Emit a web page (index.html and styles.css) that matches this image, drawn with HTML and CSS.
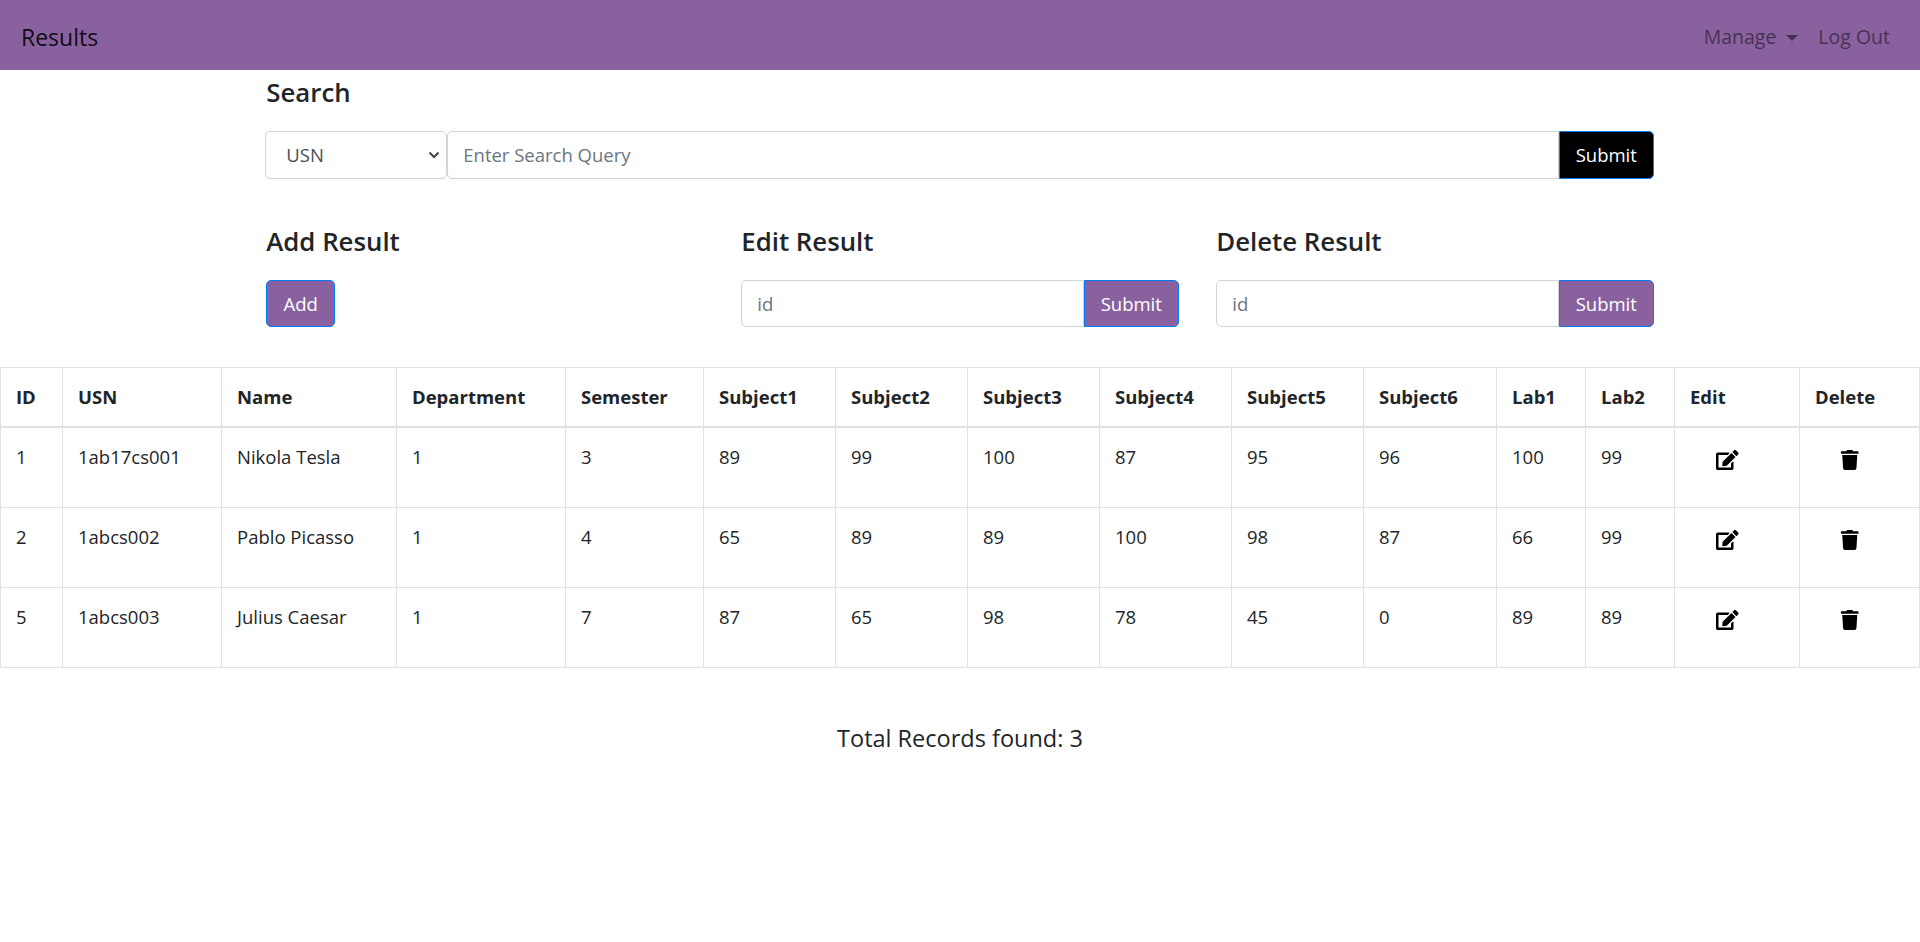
FILE: index.html
```html
<!DOCTYPE html>
<html>
<head>
	<title>Results</title>
	<link rel="stylesheet" href="styles.css">
</head>
<body>
	<nav class="navbar">
		<a class="navbar-brand" href="#">Results</a>
		<div class="navbar-links">
			<a class="nav-link" href="#">Manage<span class="caret"></span></a>
			<a class="nav-link" href="#">Log Out</a>
		</div>
	</nav>

	<div class="container">
		<h5 class="search-title">Search</h5>
		<form class="input-group search-form">
			<select class="search-select">
				<option>USN</option>
				<option>Name</option>
			</select>
			<input class="form-control" type="text" placeholder="Enter Search Query">
			<button class="btn btn-black" type="submit">Submit</button>
		</form>

		<div class="actions">
			<div class="action">
				<h5>Add Result</h5>
				<button class="btn" type="button">Add</button>
			</div>
			<div class="action">
				<h5>Edit Result</h5>
				<form class="input-group">
					<input class="form-control" type="text" placeholder="id">
					<button class="btn" type="submit">Submit</button>
				</form>
			</div>
			<div class="action">
				<h5>Delete Result</h5>
				<form class="input-group">
					<input class="form-control" type="text" placeholder="id">
					<button class="btn" type="submit">Submit</button>
				</form>
			</div>
		</div>
	</div>

	<table class="results-table">
		<colgroup>
			<col class="col-id">
			<col class="col-usn">
			<col class="col-name">
			<col class="col-dept">
			<col class="col-sem">
			<col class="col-sub">
			<col class="col-sub">
			<col class="col-sub">
			<col class="col-sub">
			<col class="col-sub">
			<col class="col-sub-last">
			<col class="col-lab">
			<col class="col-lab">
			<col class="col-edit">
			<col class="col-delete">
		</colgroup>
		<thead>
			<tr>
				<th>ID</th>
				<th>USN</th>
				<th>Name</th>
				<th>Department</th>
				<th>Semester</th>
				<th>Subject1</th>
				<th>Subject2</th>
				<th>Subject3</th>
				<th>Subject4</th>
				<th>Subject5</th>
				<th>Subject6</th>
				<th>Lab1</th>
				<th>Lab2</th>
				<th>Edit</th>
				<th>Delete</th>
			</tr>
		</thead>
		<tbody>
			<tr>
				<td>1</td><td>1ab17cs001</td><td>Nikola Tesla</td><td>1</td><td>3</td>
				<td>89</td><td>99</td><td>100</td><td>87</td><td>95</td><td>96</td><td>100</td><td>99</td>
				<td><a class="icon-btn" href="#"><svg class="icon-edit" viewBox="0 0 576 512"><path d="M402.6 83.2l90.2 90.2c3.8 3.8 3.8 10 0 13.8L274.4 405.6l-92.8 10.3c-12.4 1.4-22.9-9.1-21.5-21.5l10.3-92.8L388.8 83.2c3.8-3.8 10-3.8 13.8 0zm162-22.9l-48.8-48.8c-15.2-15.2-39.9-15.2-55.2 0l-35.4 35.4c-3.8 3.8-3.8 10 0 13.8l90.2 90.2c3.8 3.8 10 3.8 13.8 0l35.4-35.4c15.2-15.3 15.2-40 0-55.2zM384 346.2V448H64V128h229.8c3.2 0 6.2-1.3 8.5-3.5l40-40c7.6-7.6 2.2-20.5-8.5-20.5H48C21.5 64 0 85.5 0 112v352c0 26.5 21.5 48 48 48h352c26.5 0 48-21.5 48-48V306.2c0-10.7-12.9-16-20.5-8.5l-40 40c-2.2 2.3-3.5 5.3-3.5 8.5z"/></svg></a></td>
				<td><a class="icon-btn" href="#"><svg class="icon-trash" viewBox="0 0 448 512"><path d="M432 32H312l-9.4-18.7A24 24 0 0 0 281.1 0H166.8a23.72 23.72 0 0 0-21.4 13.3L136 32H16A16 16 0 0 0 0 48v32a16 16 0 0 0 16 16h416a16 16 0 0 0 16-16V48a16 16 0 0 0-16-16zM53.2 467a48 48 0 0 0 47.9 45h245.8a48 48 0 0 0 47.9-45L416 128H32z"/></svg></a></td>
			</tr>
			<tr>
				<td>2</td><td>1abcs002</td><td>Pablo Picasso</td><td>1</td><td>4</td>
				<td>65</td><td>89</td><td>89</td><td>100</td><td>98</td><td>87</td><td>66</td><td>99</td>
				<td><a class="icon-btn" href="#"><svg class="icon-edit" viewBox="0 0 576 512"><path d="M402.6 83.2l90.2 90.2c3.8 3.8 3.8 10 0 13.8L274.4 405.6l-92.8 10.3c-12.4 1.4-22.9-9.1-21.5-21.5l10.3-92.8L388.8 83.2c3.8-3.8 10-3.8 13.8 0zm162-22.9l-48.8-48.8c-15.2-15.2-39.9-15.2-55.2 0l-35.4 35.4c-3.8 3.8-3.8 10 0 13.8l90.2 90.2c3.8 3.8 10 3.8 13.8 0l35.4-35.4c15.2-15.3 15.2-40 0-55.2zM384 346.2V448H64V128h229.8c3.2 0 6.2-1.3 8.5-3.5l40-40c7.6-7.6 2.2-20.5-8.5-20.5H48C21.5 64 0 85.5 0 112v352c0 26.5 21.5 48 48 48h352c26.5 0 48-21.5 48-48V306.2c0-10.7-12.9-16-20.5-8.5l-40 40c-2.2 2.3-3.5 5.3-3.5 8.5z"/></svg></a></td>
				<td><a class="icon-btn" href="#"><svg class="icon-trash" viewBox="0 0 448 512"><path d="M432 32H312l-9.4-18.7A24 24 0 0 0 281.1 0H166.8a23.72 23.72 0 0 0-21.4 13.3L136 32H16A16 16 0 0 0 0 48v32a16 16 0 0 0 16 16h416a16 16 0 0 0 16-16V48a16 16 0 0 0-16-16zM53.2 467a48 48 0 0 0 47.9 45h245.8a48 48 0 0 0 47.9-45L416 128H32z"/></svg></a></td>
			</tr>
			<tr>
				<td>5</td><td>1abcs003</td><td>Julius Caesar</td><td>1</td><td>7</td>
				<td>87</td><td>65</td><td>98</td><td>78</td><td>45</td><td>0</td><td>89</td><td>89</td>
				<td><a class="icon-btn" href="#"><svg class="icon-edit" viewBox="0 0 576 512"><path d="M402.6 83.2l90.2 90.2c3.8 3.8 3.8 10 0 13.8L274.4 405.6l-92.8 10.3c-12.4 1.4-22.9-9.1-21.5-21.5l10.3-92.8L388.8 83.2c3.8-3.8 10-3.8 13.8 0zm162-22.9l-48.8-48.8c-15.2-15.2-39.9-15.2-55.2 0l-35.4 35.4c-3.8 3.8-3.8 10 0 13.8l90.2 90.2c3.8 3.8 10 3.8 13.8 0l35.4-35.4c15.2-15.3 15.2-40 0-55.2zM384 346.2V448H64V128h229.8c3.2 0 6.2-1.3 8.5-3.5l40-40c7.6-7.6 2.2-20.5-8.5-20.5H48C21.5 64 0 85.5 0 112v352c0 26.5 21.5 48 48 48h352c26.5 0 48-21.5 48-48V306.2c0-10.7-12.9-16-20.5-8.5l-40 40c-2.2 2.3-3.5 5.3-3.5 8.5z"/></svg></a></td>
				<td><a class="icon-btn" href="#"><svg class="icon-trash" viewBox="0 0 448 512"><path d="M432 32H312l-9.4-18.7A24 24 0 0 0 281.1 0H166.8a23.72 23.72 0 0 0-21.4 13.3L136 32H16A16 16 0 0 0 0 48v32a16 16 0 0 0 16 16h416a16 16 0 0 0 16-16V48a16 16 0 0 0-16-16zM53.2 467a48 48 0 0 0 47.9 45h245.8a48 48 0 0 0 47.9-45L416 128H32z"/></svg></a></td>
			</tr>
		</tbody>
	</table>

	<h5 class="total">Total Records found: 3</h5>
</body>
</html>
```

FILE: styles.css
```css
:root {
  --purple: #89619f;
  --text: #212529;
  --border: #dee2e6;
  --input-border: #ced4da;
  --btn-border: #007bff;
}

* {
  box-sizing: border-box;
}

html {
  font-size: 20px;
}

body {
  margin: 0;
  font-family: "Open Sans", sans-serif;
  font-size: 18.5px;
  line-height: 30px;
  color: var(--text);
  background-color: white;
}

h5 {
  margin: 0;
  font-size: 25.8px;
  line-height: 30px;
  font-weight: 600;
}

.navbar {
  height: 70px;
  padding: 4px 20px 0 21px;
  display: flex;
  align-items: center;
  justify-content: space-between;
  background-color: var(--purple);
}

.navbar-brand {
  font-size: 23px;
  color: rgba(0, 0, 0, 0.9);
  text-decoration: none;
}

.navbar-links {
  display: flex;
  align-items: center;
}

.nav-link {
  padding: 0 10px;
  font-size: 19.5px;
  color: rgba(0, 0, 0, 0.5);
  text-decoration: none;
}

.caret {
  display: inline-block;
  margin-left: 10px;
  vertical-align: 3px;
  border-top: 6px solid;
  border-left: 6px solid transparent;
  border-right: 6px solid transparent;
}

.container {
  width: 1387.5px;
  margin: 0 auto;
}

.search-title {
  padding-top: 7px;
  margin-bottom: 24px;
}

.input-group {
  display: flex;
  height: 47.5px;
}

.search-select {
  width: 182px;
  margin-left: -1px;
  padding: 0 20px;
  font-family: inherit;
  font-size: inherit;
  color: #495057;
  background-color: white;
  background-image: url("data:image/svg+xml,%3Csvg xmlns='http://www.w3.org/2000/svg' viewBox='0 0 12 8'%3E%3Cpath d='M1.5 1.5 6 6l4.500-4.500' fill='none' stroke='%23444' stroke-width='2'/%3E%3C/svg%3E");
  background-repeat: no-repeat;
  background-position: right 6px center;
  background-size: 12px 8px;
  border: 1px solid var(--input-border);
  border-radius: 5px;
  appearance: none;
}

.form-control {
  flex: 1;
  min-width: 0;
  padding: 0 15px;
  font-family: inherit;
  font-size: inherit;
  color: #495057;
  border: 1px solid var(--input-border);
  border-radius: 5px 0 0 5px;
}

.form-control::placeholder {
  color: #6c757d;
}

.btn {
  height: 47.5px;
  padding: 0 15px;
  font-family: inherit;
  font-size: inherit;
  color: white;
  background-color: var(--purple);
  border: 1px solid var(--btn-border);
  border-radius: 5px;
  cursor: pointer;
}

.input-group .btn {
  width: 95px;
  border-radius: 0 5px 5px 0;
}

.btn-black {
  background-color: black;
}

.actions {
  display: grid;
  grid-template-columns: repeat(3, 437.5px);
  column-gap: 37.5px;
  padding-top: 47px;
}

.action h5 {
  margin-bottom: 24px;
}

.action > .btn {
  width: 69px;
}

.results-table {
  width: 100%;
  margin-top: 40px;
  table-layout: fixed;
  border-collapse: collapse;
}

.results-table th,
.results-table td {
  padding: 14px 15px 15px;
  text-align: left;
  vertical-align: top;
  border: 1px solid var(--border);
}

.results-table th {
  padding-bottom: 14px;
  font-weight: 700;
  border-bottom-width: 2px;
}

.col-id { width: 62px; }
.col-usn { width: 159px; }
.col-name { width: 175px; }
.col-dept { width: 169px; }
.col-sem { width: 138px; }
.col-sub { width: 132px; }
.col-sub-last { width: 133px; }
.col-lab { width: 89px; }
.col-edit { width: 125px; }
.col-delete { width: 120px; }

.icon-btn {
  display: block;
  height: 50px;
  padding: 8px 0 0 26px;
  color: black;
}

.icon-edit,
.icon-trash {
  display: block;
  height: 20px;
  fill: currentColor;
}

.total {
  margin-top: 55px;
  text-align: center;
  font-size: 23.5px;
  font-weight: 400;
}
```
